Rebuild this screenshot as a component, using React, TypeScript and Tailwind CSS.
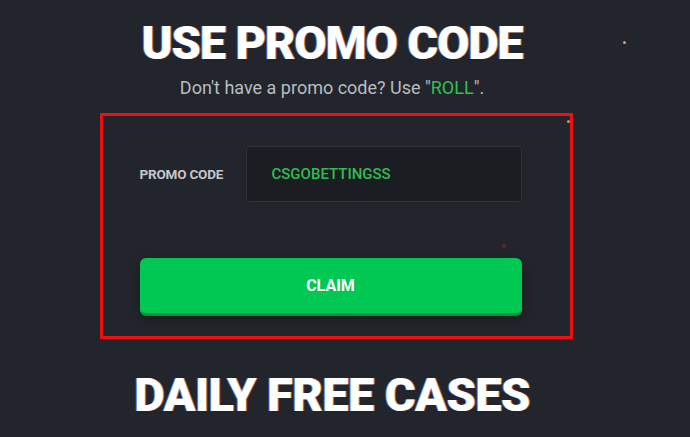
import React from "react";

export default function App() {
  const glow = { textShadow: "-1px 0 0 rgba(120,160,255,0.6), 1px 0 0 rgba(255,140,90,0.6)" };
  return (
    <div className="w-[690px] h-[437px] overflow-hidden bg-[#22252b] relative" style={{ fontFamily: "Roboto, 'Liberation Sans', sans-serif" }}>
      <span className="absolute left-[623px] top-[41px] w-[3px] h-[3px] rounded-full bg-[#d9a25c]" />
      <span className="absolute left-[567px] top-[120px] w-[3px] h-[3px] rounded-full bg-[#c79a6a]" />
      <span className="absolute left-[502px] top-[244px] w-[4px] h-[4px] rounded-full bg-[#7a2a2a] blur-[1px]" />
      <div className="flex flex-col items-center pt-[19px] pr-[26px]">
        <h1 className="text-[47px] leading-none font-black text-white tracking-[-1.2px]" style={glow}>
          USE PROMO CODE
        </h1>
        <p className="mt-[13px] text-[18px] leading-none text-[#b9bcc2]">
          Don't have a promo code? Use "<span className="text-[#30c050]">ROLL</span>".
        </p>
        <div className="mt-[16px] ml-[8px] w-[473px] h-[226px] border-[3px] border-[#ee1010] flex flex-col pl-[37px] pr-[48px] pt-[30px]">
          <div className="flex items-center">
            <span className="w-[106px] text-[13.5px] font-bold text-[#c5c7cc] tracking-[-0.2px]">PROMO CODE</span>
            <div className="w-[276px] h-[56px] rounded-[4px] bg-[#1b1d22] border border-[#30333a] flex items-center pl-[25px]">
              <span className="text-[15px] font-medium text-[#2fbd50]">CSGOBETTINGSS</span>
            </div>
          </div>
          <button className="mt-[56px] h-[58px] w-full rounded-[6px] bg-[#00c853] border-b-[3px] border-[#05933f] text-white text-[16px] font-bold shadow-[0_4px_12px_rgba(0,0,0,0.25)]">
            CLAIM
          </button>
        </div>
        <h2 className="mt-[32px] text-[47px] leading-none font-black text-white tracking-[-0.6px]" style={glow}>
          DAILY FREE CASES
        </h2>
      </div>
    </div>
  );
}
